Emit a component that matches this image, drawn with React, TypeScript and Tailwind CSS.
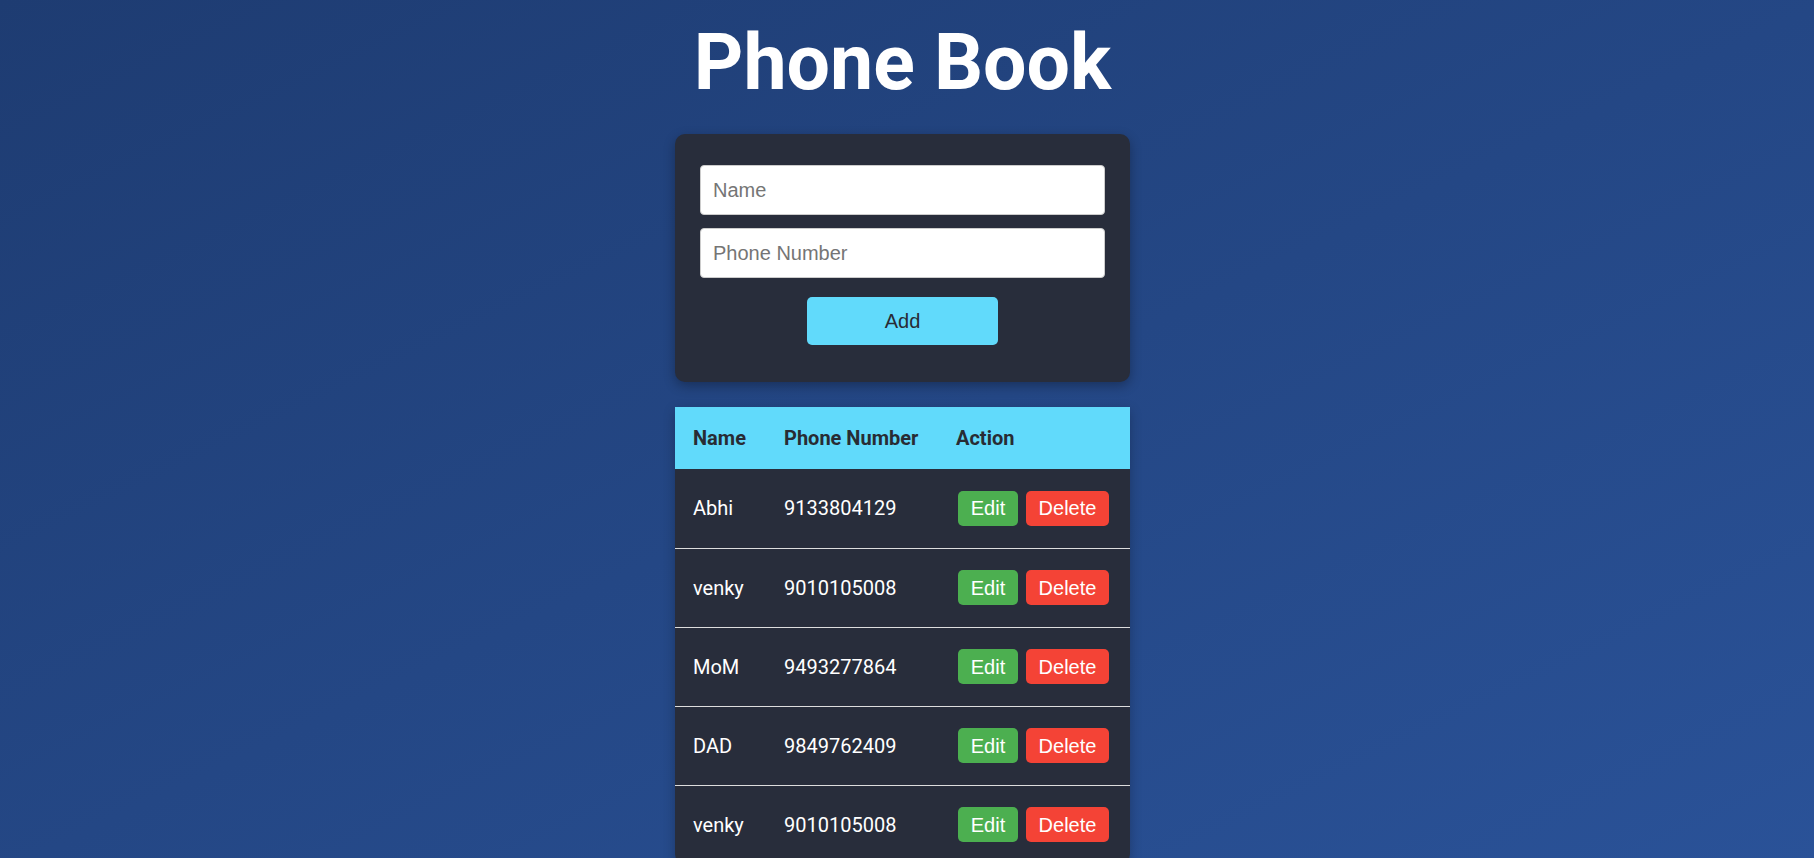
const contacts = [
  { name: "Abhi", phone: "9133804129" },
  { name: "venky", phone: "9010105008" },
  { name: "MoM", phone: "9493277864" },
  { name: "DAD", phone: "9849762409" },
  { name: "venky", phone: "9010105008" },
];

export default function App() {
  return (
    <div className="min-h-screen bg-linear-to-br from-[#1e3c72] to-[#2a5298] font-['Roboto',sans-serif]">
      <div className="flex flex-col items-center pr-[9px]">
        <h1 className="mt-[18px] mb-[26px] text-[77px] leading-[90px] font-bold text-white">Phone Book</h1>

        <div className="w-[455px] rounded-[10px] bg-[#282d3b] px-[25px] pt-[31px] pb-[37px] shadow-[0_4px_12px_rgba(0,0,0,0.3)] font-['Liberation_Sans',Arial,sans-serif]">
          <input
            type="text"
            placeholder="Name"
            className="block h-[50px] w-full rounded-[4px] border border-[#ccc] bg-white px-[12px] text-[20px] text-[#222] placeholder:text-[#757575] outline-none"
          />
          <input
            type="text"
            placeholder="Phone Number"
            className="mt-[13px] block h-[50px] w-full rounded-[4px] border border-[#ccc] bg-white px-[12px] text-[20px] text-[#222] placeholder:text-[#757575] outline-none"
          />
          <div className="mt-[19px] flex justify-center">
            <button className="h-[48px] w-[191px] rounded-[5px] bg-[#61dafb] text-[20px] text-[#282c34]">Add</button>
          </div>
        </div>

        <div className="mt-[25px] w-[455px] overflow-hidden rounded-b-[10px] bg-[#282d3b] shadow-[0_4px_12px_rgba(0,0,0,0.25)]">
          <table className="w-full border-collapse text-left">
            <thead>
              <tr className="h-[62px] bg-[#61dafb] text-[20px] font-bold text-[#282c34]">
                <th className="w-[91px] pl-[18px]">Name</th>
                <th className="w-[172px] pl-[18px]">Phone Number</th>
                <th className="pl-[18px]">Action</th>
              </tr>
            </thead>
            <tbody>
              {contacts.map((c, i) => (
                <tr
                  key={i}
                  className={`h-[79px] text-[20px] text-white ${i < contacts.length - 1 ? "border-b border-[#ddd]" : ""}`}
                >
                  <td className="pl-[18px]">{c.name}</td>
                  <td className="pl-[18px]">{c.phone}</td>
                  <td className="pl-[20px]">
                    <div className="flex gap-[8px] font-['Liberation_Sans',Arial,sans-serif]">
                      <button className="h-[35px] w-[60px] rounded-[5px] bg-[#4caf50] text-[20px] text-white">Edit</button>
                      <button className="h-[35px] w-[83px] rounded-[5px] bg-[#f44336] text-[20px] text-white">Delete</button>
                    </div>
                  </td>
                </tr>
              ))}
            </tbody>
          </table>
        </div>
      </div>
    </div>
  );
}
